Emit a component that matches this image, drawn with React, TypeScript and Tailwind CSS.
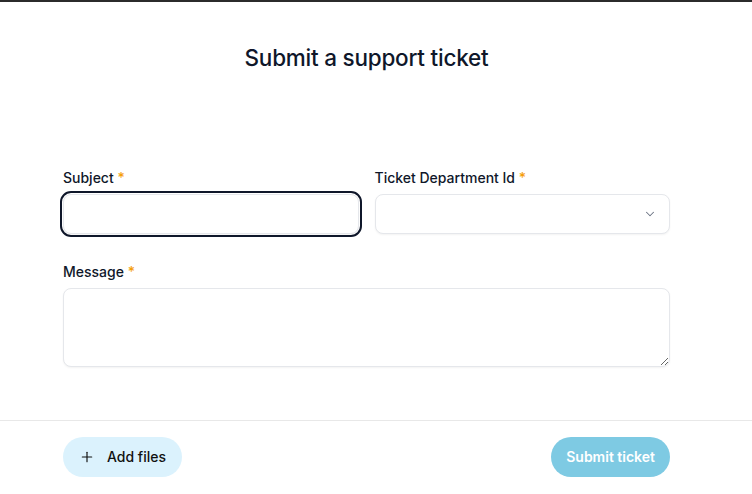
import React from 'react';
import { ChevronDown, Plus } from 'lucide-react';

const Label: React.FC<{ children: React.ReactNode }> = ({ children }) => (
  <label className="block mb-1.5 text-sm leading-5 font-medium text-[#0f172a]">
    {children} <span className="text-[#f59e0b]">*</span>
  </label>
);

export default function App() {
  return (
    <div
      className="w-[752px] h-[494px] bg-white flex flex-col border-t-2 border-[#2b2b2b] overflow-hidden"
      style={{ fontFamily: 'Inter, "Noto Sans", sans-serif' }}
    >
      {/* form body */}
      <div className="pl-[63px] pr-[82px] flex-1">
        <h1 className="pt-10 text-center text-[22.5px] leading-8 font-medium text-[#0f172a] tracking-[-0.01em]">
          Submit a support ticket
        </h1>

        <div className="mt-[94px] grid grid-cols-2 gap-4">
          <div>
            <Label>Subject</Label>
            <input
              type="text"
              className="w-full h-10 rounded-lg border border-[#e5e7eb] bg-white shadow-xs outline-2 outline-offset-1 outline-[#0f172a]"
            />
          </div>
          <div>
            <Label>Ticket Department Id</Label>
            <div className="h-10 rounded-lg border border-[#e5e7eb] bg-white shadow-xs flex items-center justify-end pr-3">
              <ChevronDown size={14} strokeWidth={1.75} className="text-gray-500" />
            </div>
          </div>
        </div>

        <div className="mt-7">
          <Label>Message</Label>
          <textarea className="block w-full h-[79px] rounded-lg border border-[#e5e7eb] bg-white shadow-xs outline-none" />
        </div>
      </div>

      {/* footer */}
      <div className="border-t border-[#e8e8e8] pl-[63px] pr-[82px] pt-4 pb-[17px] flex items-center justify-between">
        <button className="h-10 px-4 rounded-full bg-[#dbf2fd] flex items-center gap-3 text-sm font-medium text-[#111]">
          <Plus size={16} strokeWidth={1.75} />
          Add files
        </button>
        <button className="h-10 px-[15px] rounded-full bg-[#7ecae3] text-sm font-semibold text-white">
          Submit ticket
        </button>
      </div>
    </div>
  );
}
